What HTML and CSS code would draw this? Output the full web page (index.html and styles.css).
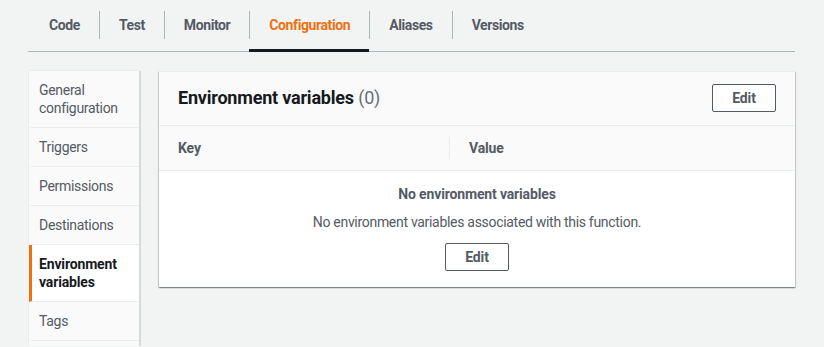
FILE: index.html
```html
<!DOCTYPE html>
<html lang="en">
<head>
    <meta charset="UTF-8">
    <meta name="viewport" content="width=device-width, initial-scale=1.0">
    <title>Lambda - Configuration</title>
    <link rel="stylesheet" href="styles.css">
</head>
<body>
    <div class="page">
        <ul class="tabs">
            <li class="tab"><span class="tab-label">Code</span></li>
            <li class="tab"><span class="tab-label">Test</span></li>
            <li class="tab"><span class="tab-label">Monitor</span></li>
            <li class="tab active"><span class="tab-label">Configuration</span></li>
            <li class="tab"><span class="tab-label">Aliases</span></li>
            <li class="tab"><span class="tab-label">Versions</span></li>
        </ul>

        <div class="content">
            <nav class="side-nav">
                <a class="side-item">General configuration</a>
                <a class="side-item">Triggers</a>
                <a class="side-item">Permissions</a>
                <a class="side-item">Destinations</a>
                <a class="side-item active">Environment variables</a>
                <a class="side-item">Tags</a>
            </nav>

            <section class="panel">
                <div class="panel-header">
                    <h2>Environment variables <span class="count">(0)</span></h2>
                    <button class="btn">Edit</button>
                </div>

                <div class="table-head">
                    <div class="col">Key</div>
                    <div class="col col-divided">Value</div>
                </div>

                <div class="empty">
                    <div class="empty-title">No environment variables</div>
                    <div class="empty-text">No environment variables associated with this function.</div>
                    <button class="btn">Edit</button>
                </div>
            </section>
        </div>
    </div>
</body>
</html>
```

FILE: styles.css
```css
* {
    margin: 0;
    padding: 0;
    box-sizing: border-box;
}

body {
    font-family: Roboto, "Liberation Sans", sans-serif;
    font-size: 14px;
    letter-spacing: -0.3px;
    background: #f2f3f3;
    color: #16191f;
}

.page {
    padding: 0 29px 0 28px;
}

/* top tabs */
.tabs {
    list-style: none;
    display: flex;
    border-bottom: 1px solid #aab7b8;
    padding-left: 1px;
}

.tab {
    padding: 11px 0 13px;
    margin-bottom: -1px;
    font-weight: 700;
    letter-spacing: -0.4px;
    color: #545b64;
}

.tab-label {
    display: block;
    padding: 0 19px;
    line-height: 28px;
    border-left: 1px solid #aab7b8;
}

.tab:first-child .tab-label {
    border-left: none;
    padding-left: 20px;
}

.tab.active {
    color: #ec7211;
    box-shadow: inset 0 -3px 0 #16191f;
}

/* layout below tabs */
.content {
    display: flex;
    align-items: flex-start;
    gap: 18px;
    margin-top: 19px;
    padding-left: 1px;
}

.side-nav {
    width: 112px;
    height: calc(100vh - 72px);
    flex-shrink: 0;
    display: flex;
    flex-direction: column;
    background: #fafafa;
    border-right: 2px solid #d5dbdb;
    box-shadow: -1px 0 0 #eaeded, 0 -1px 0 #eaeded;
}

.side-item {
    padding: 10px 6px 10px 7px;
    line-height: 18px;
    color: #545b64;
    border-bottom: 1px solid #eaeded;
    border-left: 3px solid transparent;
}

.side-item.active {
    background: #ffffff;
    color: #16191f;
    font-weight: 700;
    letter-spacing: -0.15px;
    border-left-color: #ec7211;
}

/* panel */
.panel {
    flex: 1;
    background: #ffffff;
    border-top: 1px solid #eaeded;
    box-shadow: 0 1px 1px 0 rgba(0, 28, 36, 0.3),
                1px 1px 1px 0 rgba(0, 28, 36, 0.15),
                -1px 1px 1px 0 rgba(0, 28, 36, 0.15);
}

.panel-header {
    display: flex;
    align-items: center;
    justify-content: space-between;
    padding: 12px 19px 13px;
    background: #fafafa;
    border-bottom: 1px solid #eaeded;
}

.panel-header h2 {
    font-size: 18px;
    font-weight: 700;
    letter-spacing: -0.2px;
    line-height: 28px;
}

.count {
    font-weight: 400;
    color: #687078;
}

.btn {
    font-family: inherit;
    font-size: 14px;
    font-weight: 700;
    letter-spacing: -0.15px;
    color: #545b64;
    background: #ffffff;
    border: 1px solid #545b64;
    border-radius: 2px;
    width: 64px;
    height: 28px;
    cursor: pointer;
}

.table-head {
    display: grid;
    grid-template-columns: 290px 1fr;
    align-items: center;
    height: 45px;
    background: #fafafa;
    border-bottom: 1px solid #eaeded;
    font-weight: 700;
    letter-spacing: -0.15px;
    color: #545b64;
}

.col {
    padding-left: 19px;
}

.col-divided {
    border-left: 1px solid #eaeded;
    line-height: 22px;
}

.empty {
    display: flex;
    flex-direction: column;
    align-items: center;
    padding: 13px 0 16px;
    color: #545b64;
}

.empty-title {
    font-weight: 700;
    letter-spacing: -0.15px;
    line-height: 20px;
}

.empty-text {
    line-height: 20px;
    margin: 8px 0 11px;
}
```
